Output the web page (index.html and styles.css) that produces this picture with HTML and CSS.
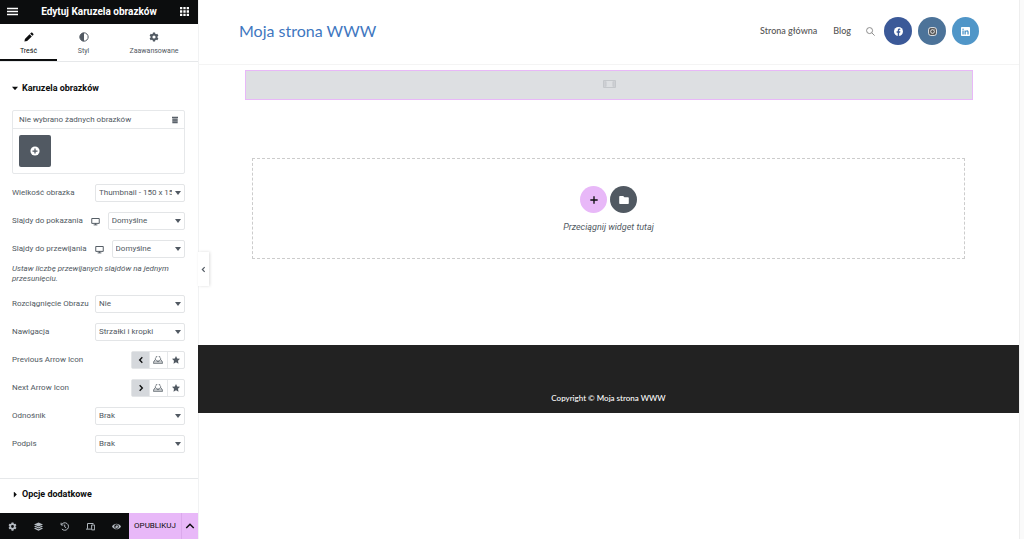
FILE: index.html
```html
<!DOCTYPE html>
<html lang="pl">
<head>
<meta charset="utf-8">
<meta name="viewport" content="width=device-width, initial-scale=1">
<title>Edytuj Karuzela obrazków</title>
<link rel="stylesheet" href="styles.css">
</head>
<body>
<svg class="sprite" aria-hidden="true">
  <symbol id="gear" viewBox="0 0 24 24"><path fill-rule="evenodd" d="M9.500 1h5l.6 3.300 2 1.100 2.900-1 2.500 4.300-2.300 2v2.600l2.300 2-2.500 4.300-2.900-1-2 1.100-.6 3.300h-5l-.6-3.300-2-1.100-2.900 1-2.500-4.300 2.300-2v-2.600l-2.300-2L4 4.400l2.900 1 2-1.100zM12 8.200a3.800 3.800 0 1 0 0 7.600 3.800 3.800 0 0 0 0-7.600z"/></symbol>
  <symbol id="desktop" viewBox="0 0 24 24"><path d="M2 4h20v13H2zM7 21h10M12 17v4" fill="none" stroke="currentColor" stroke-width="2.600"/></symbol>
  <symbol id="upload" viewBox="0 0 24 20"><path d="M6 10H4l-3 5v4h22v-4l-3-5h-2M10 14v-3H8a4 4 0 0 1-1-7 5 5 0 0 1 10 0 4 4 0 0 1-1 7h-2v3zM1 15h22" fill="none" stroke="currentColor" stroke-width="1.800" stroke-linejoin="round"/></symbol>
  <symbol id="star" viewBox="0 0 24 24"><path d="M12 0l3.600 7.500 8.400 1-6 5.800L19.500 23 12 18.800 4.500 23 6 14.300 0 8.500l8.400-1z"/></symbol>
  <symbol id="chevron-left" viewBox="0 0 24 24"><path d="M16 4l-8 8 8 8" fill="none" stroke="currentColor" stroke-width="4"/></symbol>
  <symbol id="chevron-right" viewBox="0 0 24 24"><path d="M8 4l8 8-8 8" fill="none" stroke="currentColor" stroke-width="4"/></symbol>
</svg>
<div class="editor">
  <aside class="panel">
    <header class="panel-head">
      <button class="head-btn" aria-label="Menu"><svg class="icon-menu" viewBox="0 0 11 9"><path d="M0 1.500h11M0 4.500h11M0 7.500h11" stroke="currentColor" stroke-width="1.600"/></svg></button>
      <h1>Edytuj Karuzela obrazków</h1>
      <button class="head-btn" aria-label="Widżety"><svg class="icon-grid" viewBox="0 0 9 9"><path d="M0 0h2.300v2.300H0zM3.350 0h2.300v2.300h-2.300zM6.700 0H9v2.300H6.700zM0 3.350h2.300v2.300H0zM3.350 3.350h2.300v2.300h-2.300zM6.700 3.350H9v2.300H6.700zM0 6.700h2.300V9H0zM3.350 6.700h2.300V9h-2.300zM6.700 6.700H9V9H6.700z"/></svg></button>
    </header>
    <nav class="tabs">
      <button class="tab tab-active"><svg viewBox="0 0 24 24"><path d="M17 1.500c1-.8 2-.6 3 .3l2.200 2.200c.9 1 1 2 .2 3l-2.300 2.200-5.400-5.300zM13.300 5.200l5.500 5.400L7.500 21.800 1 23l1.200-6.500z"/></svg>Treść</button>
      <button class="tab"><svg viewBox="0 0 24 24"><circle cx="12" cy="12" r="10" fill="none" stroke="currentColor" stroke-width="2.400"/><path d="M12 2a10 10 0 0 0 0 20z"/></svg>Styl</button>
      <button class="tab"><svg><use href="#gear"/></svg>Zaawansowane</button>
    </nav>
    <main class="controls">
      <button class="section-title"><span class="caret-down"></span>Karuzela obrazków</button>
      <div class="gallery">
        <div class="gallery-head"><span>Nie wybrano żadnych obrazków</span><button aria-label="Wyczyść galerię"><svg viewBox="0 0 24 24"><path d="M3 2h18v4H3zM4 7h16v15H4z"/><path d="M4 7h16M4 12h16M4 17h16" stroke="#fff" stroke-width="1"/></svg></button></div>
        <button class="gallery-add" aria-label="Dodaj obrazki"><svg viewBox="0 0 24 24"><circle cx="12" cy="12" r="11" fill="#fff"/><path d="M12 6v12M6 12h12" stroke="#515962" stroke-width="3"/></svg></button>
      </div>
      <div class="row"><label for="size">Wielkość obrazka</label><div class="select-box"><select id="size"><option>Thumbnail - 150 x 150</option></select></div></div>
      <div class="row"><label for="show">Slajdy do pokazania</label><svg class="device"><use href="#desktop"/></svg><div class="select-box fill"><select id="show"><option>Domyślne</option></select></div></div>
      <div class="row"><label for="scroll">Slajdy do przewijania</label><svg class="device"><use href="#desktop"/></svg><div class="select-box fill"><select id="scroll"><option>Domyślne</option></select></div></div>
      <p class="hint">Ustaw liczbę przewijanych slajdów na jednym przesunięciu.</p>
      <div class="row"><label for="stretch">Rozciągnięcie Obrazu</label><div class="select-box"><select id="stretch"><option>Nie</option></select></div></div>
      <div class="row"><label for="navi">Nawigacja</label><div class="select-box"><select id="navi"><option>Strzałki i kropki</option></select></div></div>
      <div class="row"><span>Previous Arrow Icon</span><div class="choices"><button class="chosen" aria-label="Strzałka w lewo"><svg><use href="#chevron-left"/></svg></button><button aria-label="Prześlij SVG"><svg class="large"><use href="#upload"/></svg></button><button aria-label="Biblioteka ikon"><svg><use href="#star"/></svg></button></div></div>
      <div class="row"><span>Next Arrow Icon</span><div class="choices"><button class="chosen" aria-label="Strzałka w prawo"><svg><use href="#chevron-right"/></svg></button><button aria-label="Prześlij SVG"><svg class="large"><use href="#upload"/></svg></button><button aria-label="Biblioteka ikon"><svg><use href="#star"/></svg></button></div></div>
      <div class="row"><label for="link">Odnośnik</label><div class="select-box"><select id="link"><option>Brak</option></select></div></div>
      <div class="row"><label for="caption">Podpis</label><div class="select-box"><select id="caption"><option>Brak</option></select></div></div>
    </main>
    <section class="more"><button class="section-title"><span class="caret-right"></span>Opcje dodatkowe</button></section>
    <footer class="panel-foot">
      <div class="tools">
        <button aria-label="Ustawienia"><svg><use href="#gear"/></svg></button>
        <button aria-label="Nawigator"><svg viewBox="0 0 24 24"><path d="M12 1l12 5.500L12 12 0 6.500zM3.500 10L12 14l8.500-4 3.500 1.800L12 17.500 0 11.800zM3.500 15.500l8.500 4 8.500-4 3.500 1.800L12 23 0 17.300z"/></svg></button>
        <button aria-label="Historia"><svg viewBox="0 0 24 24"><path d="M4 7a10 10 0 1 1 1 11.500M3 2v6h6M12.500 7v6l4 2.500" fill="none" stroke="currentColor" stroke-width="2.600"/></svg></button>
        <button aria-label="Tryb responsywny"><svg viewBox="0 0 24 24"><path d="M20 4H4v14M0 19h13M15 8h8v13h-8z" fill="none" stroke="currentColor" stroke-width="2.600"/></svg></button>
        <button aria-label="Podgląd"><svg viewBox="0 0 24 24"><path fill-rule="evenodd" d="M0 12C5 2 19 2 24 12 19 22 5 22 0 12zm12-6a6 6 0 1 0 0 12 6 6 0 0 0 0-12z"/><path d="M12 8a4 4 0 1 1-4 4c2 1 4-1 4-4z"/></svg></button>
      </div>
      <button class="publish">OPUBLIKUJ</button>
      <button class="publish-more" aria-label="Opcje zapisu"><svg viewBox="0 0 24 24"><path d="M3 17l9-9 9 9" fill="none" stroke="currentColor" stroke-width="3.500"/></svg></button>
    </footer>
  </aside>
  <div class="preview">
    <button class="collapse" aria-label="Ukryj panel"><svg viewBox="0 0 24 24"><path d="M16 4l-8 8 8 8" fill="none" stroke="currentColor" stroke-width="4"/></svg></button>
    <header class="site-head">
      <a class="site-name" href="#">Moja strona WWW</a>
      <nav class="site-nav">
        <a href="#">Strona główna</a>
        <a href="#">Blog</a>
        <button class="search" aria-label="Szukaj"><svg viewBox="0 0 24 24"><circle cx="9.500" cy="9.500" r="8" fill="none" stroke="currentColor" stroke-width="2.200"/><path d="M15.500 15.500L23 23" stroke="currentColor" stroke-width="2.200"/></svg></button>
        <div class="socials">
          <a class="facebook" href="#" aria-label="Facebook"><svg viewBox="0 0 24 24"><circle cx="12" cy="12" r="12" fill="#fff"/><path d="M10 24v-9H7v-3.500h3V9c0-3.200 1.800-4.800 4.600-4.800l2.400.2v3h-1.500c-1.500 0-1.900.9-1.900 1.900v2.200h3.300L16.300 15h-2.700v9z" fill="#3b5998"/></svg></a>
          <a class="instagram" href="#" aria-label="Instagram"><svg viewBox="0 0 24 24" fill="none" stroke="#fff" stroke-width="2.200"><rect x="1.500" y="1.500" width="21" height="21" rx="6"/><circle cx="12" cy="12" r="5"/><path d="M17.500 6h1.500"/></svg></a>
          <a class="linkedin" href="#" aria-label="LinkedIn"><svg viewBox="0 0 24 24"><path d="M2 0h20a2 2 0 0 1 2 2v20a2 2 0 0 1-2 2H2a2 2 0 0 1-2-2V2a2 2 0 0 1 2-2z" fill="#fff"/><path d="M3.700 9.200h3.500v11H3.700zM5.500 3.700a2 2 0 1 1 0 4.100 2 2 0 0 1 0-4.100zM9.300 9.200h3.400v1.500c1.800-3 7.800-2.500 7.800 3v6.500H17v-6c0-3.200-4.200-2.800-4.200 0v6H9.300z" fill="#5096c8"/></svg></a>
        </div>
      </nav>
    </header>
    <div class="widget"><svg viewBox="0 0 26 16"><path d="M1 1h24v14H1zM6 3v10M20 3v10" fill="none" stroke="currentColor" stroke-width="2"/><path d="M2 2h4v12H2zM20 2h4v12h-4z" opacity=".6"/></svg></div>
    <section class="dropzone">
      <div class="drop-buttons">
        <button class="drop-add" aria-label="Dodaj kontener"><svg viewBox="0 0 24 24"><path d="M12 1v22M1 12h22" stroke="currentColor" stroke-width="4"/></svg></button>
        <button class="drop-folder" aria-label="Dodaj szablon"><svg class="folder" viewBox="0 0 24 20"><path d="M2 0h8l3 3h9a2 2 0 0 1 2 2v13a2 2 0 0 1-2 2H2a2 2 0 0 1-2-2V2a2 2 0 0 1 2-2z"/></svg></button>
      </div>
      <p>Przeciągnij widget tutaj</p>
    </section>
    <footer class="site-foot">Copyright © Moja strona WWW</footer>
  </div>
</div>
</body>
</html>
```

FILE: styles.css
```css
* { box-sizing: border-box; }
body { margin: 0; background: #fafafa; color: #515962; font: 8px/10px Roboto, "Liberation Sans", sans-serif; }
button { margin: 0; padding: 0; border: 0; background: none; color: inherit; font: inherit; display: flex; align-items: center; justify-content: center; }
svg { display: block; width: 10px; height: 10px; fill: currentColor; flex: none; }
.sprite { display: none; }
a { color: inherit; text-decoration: none; }
.editor { display: flex; min-height: 100vh; }

.panel { position: relative; width: 198px; flex: none; display: flex; flex-direction: column; background: #fff; }
.panel-head { display: flex; align-items: center; justify-content: space-between; height: 24px; padding: 0 9px 1px 7px; background: #0c0d0e; color: #fff; }
.panel-head h1 { margin: 0; font-size: 10px; line-height: 12px; font-weight: 700; }
.icon-menu { width: 11px; height: 9px; }
.icon-grid { width: 9px; height: 9px; }
.tabs { display: grid; grid-template-columns: 57px 53px 1fr; height: 38px; border-bottom: 1px solid #e6e8ea; }
.tab { flex-direction: column; gap: 4px; font-size: 7px; padding-top: 3px; }
.tab-active { color: #0c0d0e; border-bottom: 2px solid #0c0d0e; padding-top: 5px; }
.controls { padding: 21px 13px 15px 12px; }
.section-title { gap: 4px; color: #0c0d0e; font-size: 9px; line-height: 11px; font-weight: 700; }
.caret-down, .caret-right { width: 6px; height: 6px; background: currentColor; }
.caret-down { clip-path: polygon(0 20%, 100% 20%, 50% 80%); }
.caret-right { clip-path: polygon(30% 0, 80% 50%, 30% 100%); }
.gallery { margin: 16px 0 10px; border: 1px solid #e6e8ea; border-radius: 2px; height: 64px; }
.gallery-head { display: flex; align-items: center; justify-content: space-between; height: 18px; padding: 0 5px 0 6px; border-bottom: 1px solid #e6e8ea; }
.gallery-head svg { width: 8px; height: 8px; }
.gallery-add { width: 32px; height: 32px; margin: 6px; border-radius: 2px; background: #515962; }
.row { display: flex; align-items: center; justify-content: space-between; height: 18px; margin-bottom: 10px; white-space: nowrap; }
.select-box { position: relative; width: 90px; height: 18px; }
.select-box::after { content: ""; position: absolute; right: 4px; top: 7px; width: 6px; height: 4px; background: #515962; clip-path: polygon(0 0, 100% 0, 50% 100%); pointer-events: none; }
.select-box select { appearance: none; display: block; width: 100%; height: 100%; padding: 0 12px 0 3px; border: 1px solid #e3e5e7; border-radius: 2px; background: #fff; color: #515962; font: inherit; }
.device { width: 9px; height: 9px; margin: 0 8px; }
.select-box.fill { flex: 1; }
.hint { margin: -4px 0 9px; height: 22px; font-style: italic; }
.choices { display: grid; grid-template-columns: repeat(3, 1fr); width: 54px; height: 18px; border: 1px solid #e3e5e7; border-radius: 2px; }
.choices button + button { border-left: 1px solid #e6e8ea; }
.choices .chosen { background: #d5d8dc; color: #0c0d0e; }
.choices svg { width: 8px; height: 8px; }
.choices svg.large { width: 10px; height: 8px; }
.more { flex: 1; padding: 10px 13px 10px 12px; border-top: 1px solid #e6e8ea; }
.panel-foot { display: flex; height: 26px; background: #0c0d0e; }
.tools { flex: 1; display: grid; grid-template-columns: repeat(5, 1fr); color: #b5bbc2; }
.tools svg { width: 9px; height: 9px; }
.publish { width: 52px; background: #e8b8f8; color: #0c0d0e; }
.publish-more { width: 17px; background: #e8b8f8; color: #0c0d0e; border-left: 1px solid #dba9ec; }

.preview { position: relative; flex: 1; min-width: 0; margin-right: 4px; background: #fff; border-right: 1px solid #eee; box-shadow: inset 1px 0 #f1f2f3; }
.collapse { position: absolute; left: 0; top: 252px; width: 11px; height: 34px; background: #fff; box-shadow: 1px 0 3px #0002; }
.collapse svg { width: 7px; height: 7px; }
.site-head { display: flex; align-items: center; justify-content: space-between; height: 65px; padding: 0 40px 2px 41px; border-bottom: 1px solid #f4f4f4; font-family: Lato, sans-serif; }
.site-name { color: #3f77bf; font-size: 16px; line-height: 20px; }
.site-nav { display: flex; align-items: center; color: #555; font-size: 9px; line-height: 12px; font-weight: 500; }
.site-nav a + a { margin-left: 16px; }
.search { margin: 0 9px 0 15px; color: #777; }
.search svg { width: 9px; height: 9px; }
.site-nav .socials { display: flex; gap: 6px; }
.socials a, .site-nav .socials a + a { display: flex; align-items: center; justify-content: center; width: 28px; height: 28px; margin: 0; border-radius: 50%; }
.site-nav .socials .linkedin { width: 27px; }
.socials svg { width: 9px; height: 9px; }
.facebook { background: #3b5998; }
.instagram { background: #4c7399; }
.linkedin { background: #5096c8; }
.widget { display: flex; align-items: center; justify-content: center; height: 30px; margin: 5px 46px 0 47px; padding-bottom: 2px; background: #dddfe2; border: 1px solid #e8b8f8; color: #c4c7cb; }
.widget svg { width: 13px; height: 8px; }
.dropzone { display: flex; flex-direction: column; align-items: center; height: 101px; margin: 58px 54px 86px; padding-top: 27px; border: 1px dashed #ccc; }
.drop-buttons { display: flex; gap: 3px; }
.drop-add, .drop-folder { width: 27px; height: 27px; border-radius: 50%; }
.drop-add { background: #e8b8f8; color: #0c0d0e; }
.drop-folder { background: #515962; color: #fff; }
.drop-add svg { width: 8px; height: 8px; }
.folder { width: 10px; height: 8px; }
.dropzone p { margin: 9px 0 0; font-size: 9px; font-style: italic; }
.site-foot { height: 68px; padding-top: 47px; background: #222; color: #fff; font: 500 8px/12px Lato, sans-serif; text-align: center; }
```
